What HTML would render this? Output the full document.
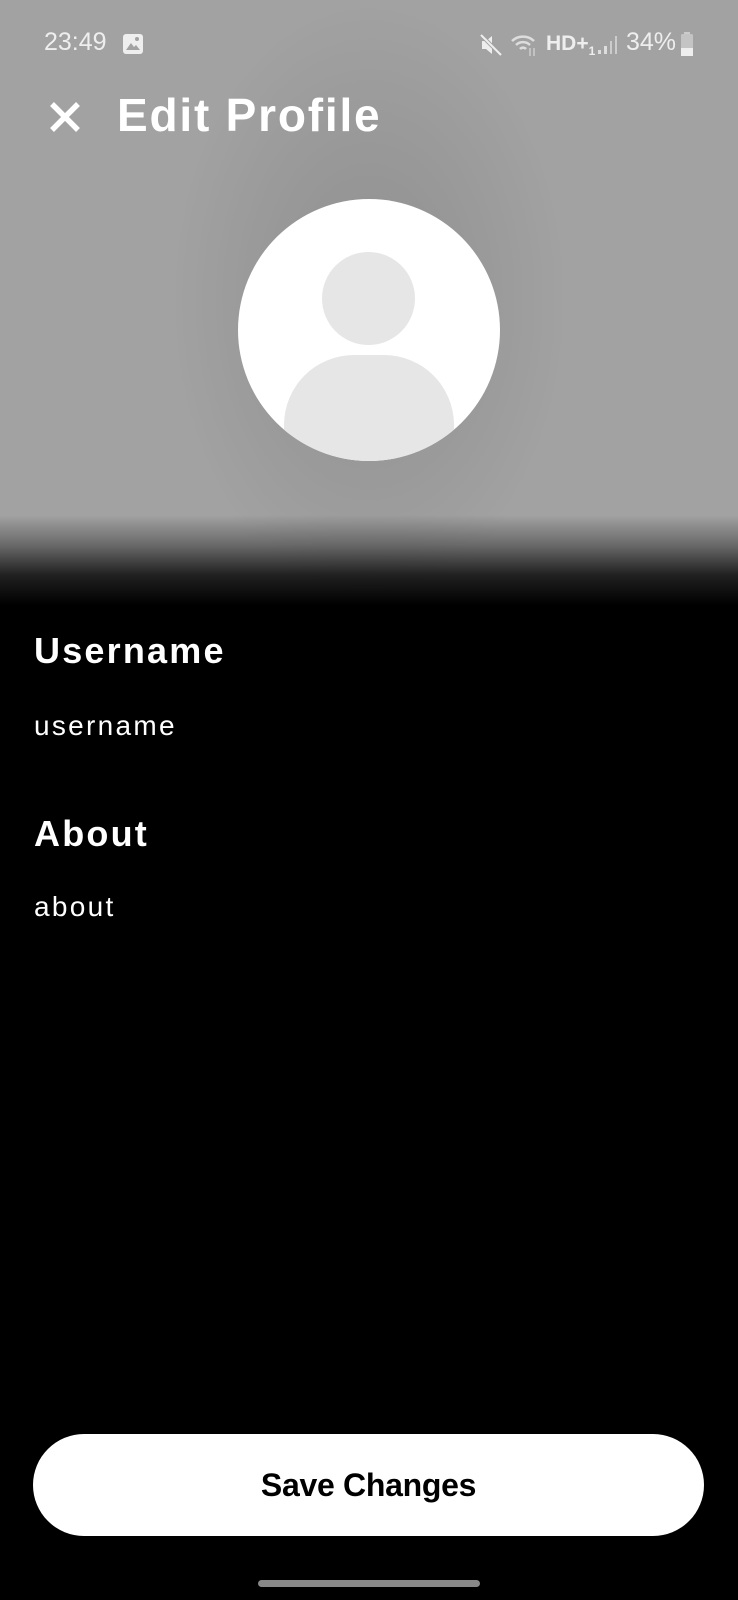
<!DOCTYPE html>
<html><head><meta charset="utf-8"><style>
*{margin:0;padding:0;box-sizing:border-box}
html,body{width:738px;height:1600px;background:#000;overflow:hidden;font-family:"Liberation Sans",sans-serif;color:#fff}
.top{position:absolute;left:0;top:0;width:738px;height:620px;
background:
linear-gradient(to bottom,rgba(0,0,0,0) 0,rgba(0,0,0,0) 515px,rgba(0,0,0,.35) 545px,rgba(0,0,0,.8) 575px,#000 605px),
radial-gradient(ellipse 200px 300px at 369px 300px,#8f8f8f 0,#9a9a9a 60%,#a2a2a2 100%);
background-color:#a2a2a2}
.sb{position:absolute;top:28px;font-size:25px;color:#eee}
.circle{position:absolute;left:238px;top:199px;width:262px;height:262px;border-radius:50%;background:#fff;overflow:hidden}
.head{position:absolute;left:84px;top:53px;width:93px;height:93px;border-radius:50%;background:#e6e6e6}
.body{position:absolute;left:46px;top:156px;width:170px;height:140px;border-radius:70px 70px 0 0;background:#e6e6e6}
h1{position:absolute;left:117px;top:88px;font-size:46px;font-weight:bold;letter-spacing:1.8px}
.h{position:absolute;left:34px;font-size:36px;font-weight:bold;letter-spacing:2.2px}
.t{position:absolute;left:34px;font-size:28px;letter-spacing:2.3px}
.btn{position:absolute;left:33px;top:1434px;width:671px;height:102px;border-radius:51px;background:#fff;color:#000;font-weight:bold;font-size:32px;text-align:center;line-height:102px;letter-spacing:-0.3px}
.home{position:absolute;left:258px;top:1580px;width:222px;height:7px;border-radius:4px;background:#888}
</style></head><body>
<div class="top"></div>
<div class="sb" style="left:44px">23:49</div>
<svg style="position:absolute;left:122px;top:33px" width="22" height="22" viewBox="0 0 22 22"><rect x="1" y="1" width="20" height="20" rx="3" fill="#eee"/><path d="M4 17 L9 10 L12 14 L14 12 L18 17Z" fill="#a2a2a2"/><circle cx="15" cy="6" r="2" fill="#a2a2a2"/></svg>
<svg style="position:absolute;left:478px;top:32px" width="26" height="26" viewBox="0 0 26 26"><path d="M4 9h4l6-5v18l-6-5H4z" fill="#eee"/><path d="M3 3 L23 23" stroke="#a2a2a2" stroke-width="4"/><path d="M3 3 L23 23" stroke="#eee" stroke-width="2"/></svg>
<svg style="position:absolute;left:510px;top:32px" width="30" height="26" viewBox="0 0 30 26"><path d="M2 9 A16 16 0 0 1 24 9 M6 13 A10 10 0 0 1 20 13 M10 17 A4 4 0 0 1 16 17" stroke="#ddd" stroke-width="2.5" fill="none"/><path d="M20 16v8M24 24v-8" stroke="#ccc" stroke-width="1.5"/></svg>
<div class="sb" style="left:546px;font-size:21px;top:32px;font-weight:bold">HD+<sub style="font-size:12px">1</sub></div>
<svg style="position:absolute;left:596px;top:34px" width="22" height="22" viewBox="0 0 22 22"><rect x="2" y="16" width="3" height="4" fill="#ddd"/><rect x="8" y="12" width="3" height="8" fill="#ddd"/><rect x="14" y="7" width="2" height="13" fill="#ccc"/><rect x="19" y="2" width="2" height="18" fill="#ccc"/></svg>
<div class="sb" style="left:626px">34%</div>
<svg style="position:absolute;left:680px;top:31px" width="14" height="26" viewBox="0 0 14 26"><rect x="4" y="1" width="6" height="3" fill="#ccc"/><rect x="1" y="3" width="12" height="22" rx="1.5" fill="#c4c4c4"/><rect x="1" y="17" width="12" height="8" fill="#eee"/></svg>
<svg style="position:absolute;left:48px;top:100px" width="34" height="34" viewBox="0 0 34 34"><path d="M4 4 L30 30 M30 4 L4 30" stroke="#fff" stroke-width="5.5"/></svg>
<h1>Edit Profile</h1>
<div class="circle"><div class="head"></div><div class="body"></div></div>
<div class="h" style="top:630px">Username</div>
<div class="t" style="top:710px">username</div>
<div class="h" style="top:813px">About</div>
<div class="t" style="top:891px">about</div>
<div class="btn">Save Changes</div>
<div class="home"></div>
</body></html>
